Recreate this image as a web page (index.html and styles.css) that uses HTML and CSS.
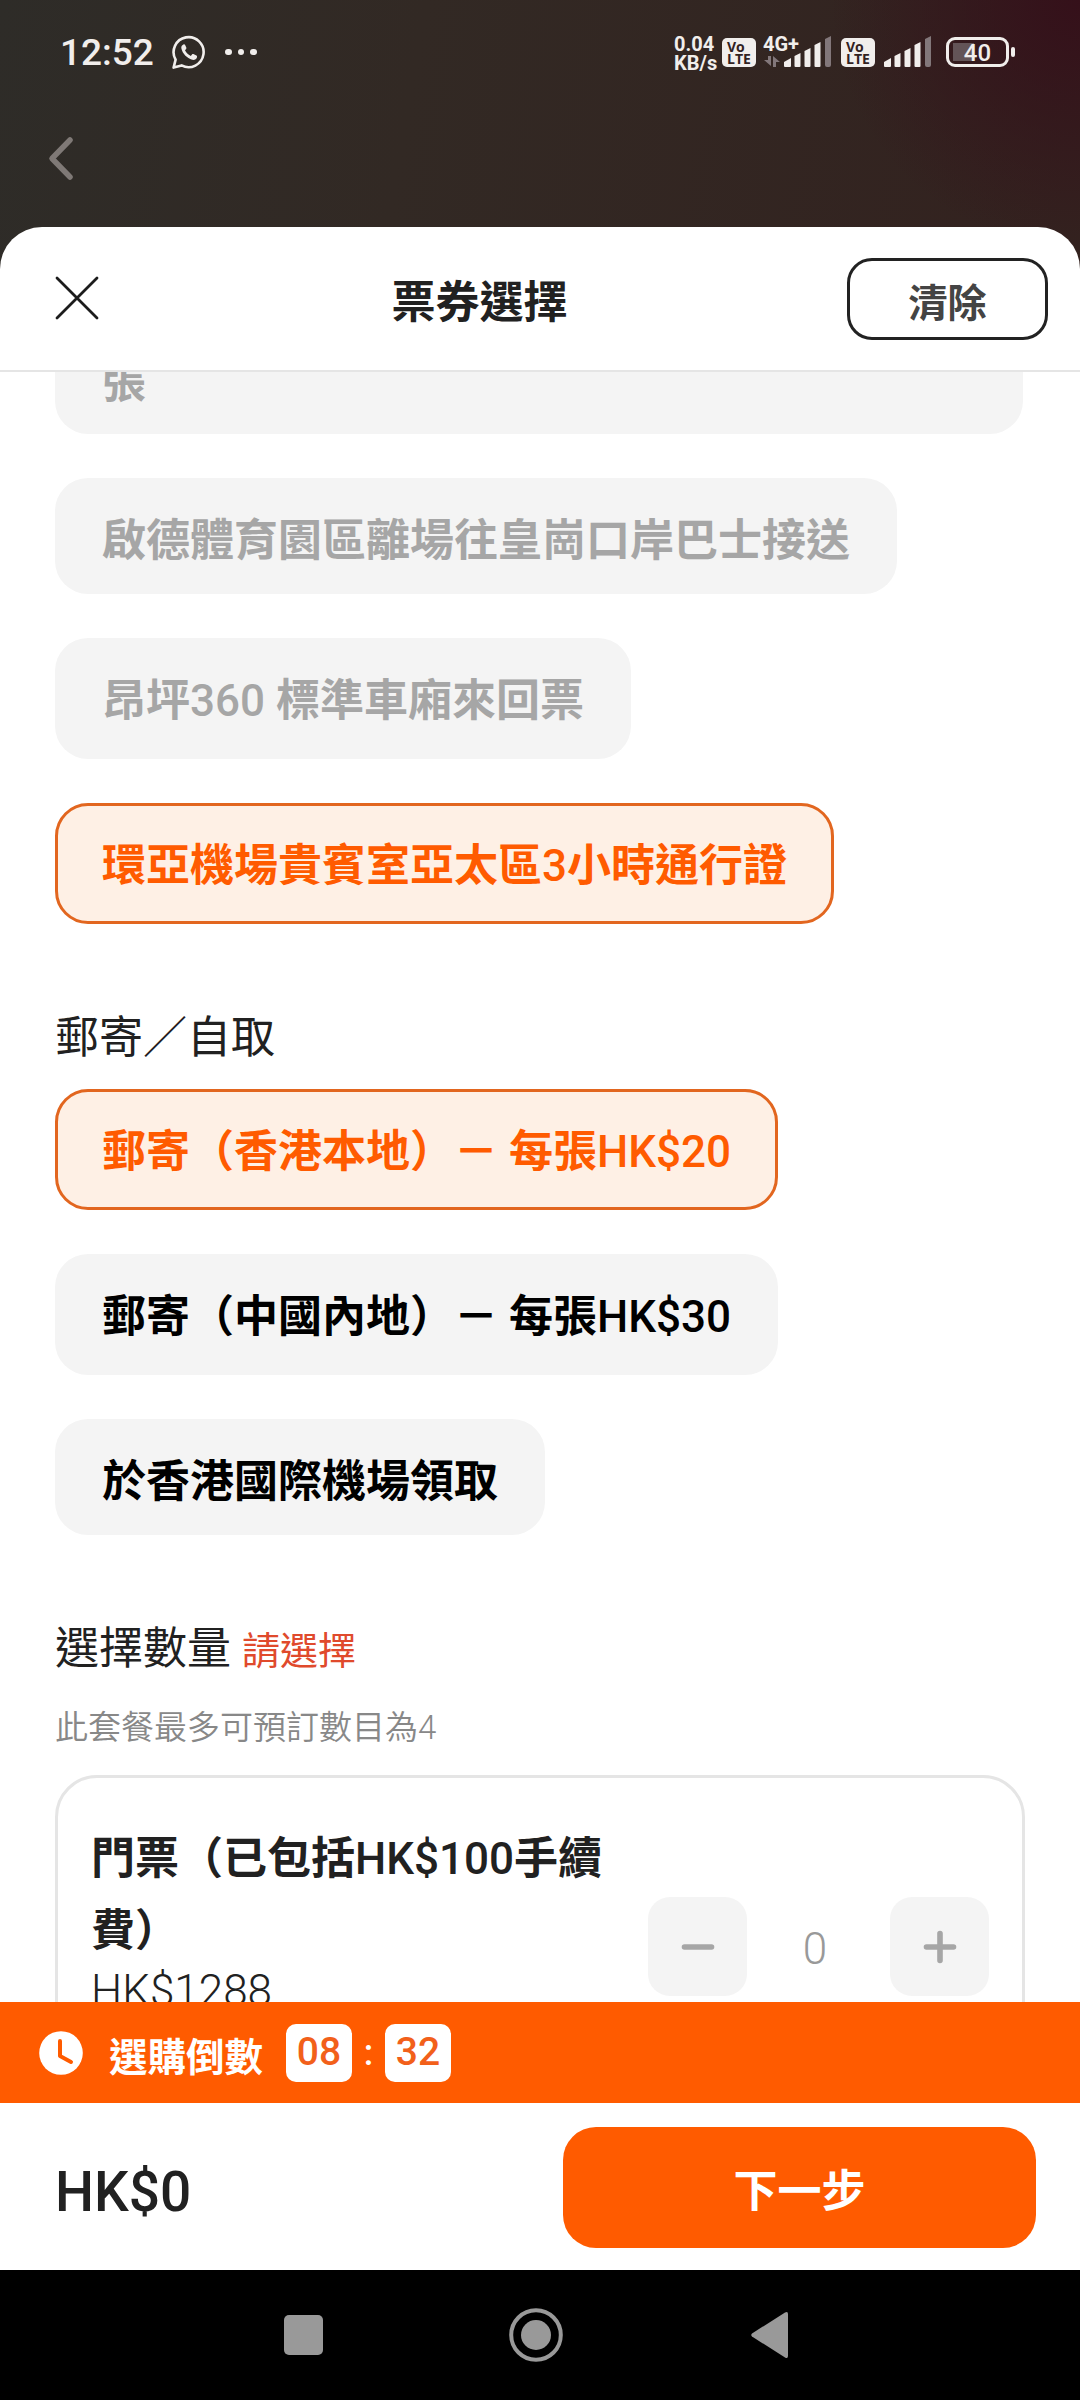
FILE: index.html
```html
<!DOCTYPE html>
<html lang="zh-Hant">
<head>
    <meta charset="UTF-8">
    <meta name="viewport" content="width=device-width, initial-scale=1.0">
    <title>票券選擇</title>
    <link rel="stylesheet" href="styles.css">
</head>
<body>
    <div class="screen">
        <div class="status-bar">
            <span class="time">12:52</span>
            <svg class="whatsapp" width="34" height="34" viewBox="0 0 34 34" fill="none">
                <path d="M1.6 32.6 L3.6 24.6 A15 15 0 1 1 9.6 30.4 Z" stroke="#f1eeec" stroke-width="2.6" stroke-linejoin="round"/>
                <path d="M11.4 9.4c-1.6.6-2.4 2.2-2 4.2 1 5 5.6 9.800 10.800 11.200 2.200.6 4.200-.6 4.800-2.600.2-.8 0-1.200-.6-1.600l-3-1.500c-.6-.3-1-.2-1.400.3l-1.200 1.500c-2.800-1.200-4.600-3-5.800-5.600l1.100-1.400c.3-.4.4-.8.200-1.300l-1.300-2.800c-.3-.6-.8-.7-1.600-.4z" fill="#f1eeec"/>
            </svg>
            <div class="dots"><i></i><i></i><i></i></div>

            <div class="status-right">
                <div class="speed"><div>0.04</div><div>KB/s</div></div>
                <div class="volte"><div>Vo</div><div>LTE</div></div>
                <div class="signal signal-data">
                    <span class="net">4G+</span>
                    <svg width="70" height="34" viewBox="0 0 70 34">
                        <g fill="#82777a">
                            <path d="M6 21h3v10L2 25h4z"/>
                            <path d="M11 32h3v-5h4l-7-6z"/>
                            <path d="M63 4l6-3v29a2 2 0 0 1-2 2h-2a2 2 0 0 1-2-2z"/>
                        </g>
                        <g fill="#f1eeec">
                            <path d="M22 27l7-4v8q0 1-1 1h-5q-1 0-1-1z"/>
                            <path d="M32.500 21l6-3v13q0 1-1 1h-4q-1 0-1-1z"/>
                            <path d="M42.500 16l6-3v18q0 1-1 1h-4q-1 0-1-1z"/>
                            <path d="M52.500 10l6-3v24q0 1-1 1h-4q-1 0-1-1z"/>
                        </g>
                    </svg>
                </div>
                <div class="volte"><div>Vo</div><div>LTE</div></div>
                <svg class="signal-two" width="50" height="34" viewBox="20 0 50 34">
                    <path d="M63 4l6-3v29a2 2 0 0 1-2 2h-2a2 2 0 0 1-2-2z" fill="#82777a"/>
                    <g fill="#f1eeec">
                        <path d="M22 27l7-4v8q0 1-1 1h-5q-1 0-1-1z"/>
                        <path d="M32.500 21l6-3v13q0 1-1 1h-4q-1 0-1-1z"/>
                        <path d="M42.500 16l6-3v18q0 1-1 1h-4q-1 0-1-1z"/>
                        <path d="M52.500 10l6-3v24q0 1-1 1h-4q-1 0-1-1z"/>
                    </g>
                </svg>
                <div class="battery">40</div>
            </div>
        </div>

        <div class="app-bar">
            <svg width="26" height="46" viewBox="0 0 26 46" fill="none" stroke="#7f7976" stroke-width="5.500" stroke-linecap="round" stroke-linejoin="round">
                <path d="M22 4 L4 22.500 L22 41"/>
            </svg>
        </div>

        <div class="sheet">
            <div class="sheet-header">
                <svg class="close" width="44" height="44" viewBox="0 0 44 44" stroke="#1c1c1c" stroke-width="2.800" stroke-linecap="round">
                    <path d="M2 2 L42 42 M42 2 L2 42"/>
                </svg>
                <h1>票券選擇</h1>
                <button class="clear">清除</button>
            </div>

            <div class="content">
                <div class="options extras">
                    <div class="option wide disabled">張</div>
                    <div class="option short disabled">啟德體育園區離場往皇崗口岸巴士接送</div>
                    <div class="option disabled">昂坪<span>360 </span>標準車廂來回票</div>
                    <div class="option selected">環亞機場貴賓室亞太區<span>3</span>小時通行證</div>
                </div>

                <h2>郵寄／自取</h2>
                <div class="options">
                    <div class="option selected">郵寄（香港本地）－<span> </span>每張<span>HK$20</span></div>
                    <div class="option">郵寄（中國內地）－<span> </span>每張<span>HK$30</span></div>
                    <div class="option short">於香港國際機場領取</div>
                </div>

                <h2 class="quantity-title">選擇數量 <span>請選擇</span></h2>
                <p class="hint">此套餐最多可預訂數目為4</p>

                <div class="ticket">
                    <div class="ticket-info">
                        <div class="ticket-name">門票（已包括<span>HK$100</span>手續費）</div>
                        <div class="ticket-price">HK$1288</div>
                    </div>
                    <div class="stepper">
                        <button>
                            <svg width="36" height="36" viewBox="0 0 36 36" stroke="#a6a6a6" stroke-width="5.600" stroke-linecap="round"><path d="M4.500 18H31.500"/></svg>
                        </button>
                        <span>0</span>
                        <button>
                            <svg width="36" height="36" viewBox="0 0 36 36" stroke="#a6a6a6" stroke-width="5.600" stroke-linecap="round"><path d="M4.500 18H31.500M18 4.500V31.500"/></svg>
                        </button>
                    </div>
                </div>
            </div>

            <div class="countdown">
                <svg width="44" height="44" viewBox="0 0 44 44" fill="none">
                    <circle cx="22" cy="22" r="21.800" fill="#fff"/>
                    <path d="M21 10V25L32 31" stroke="#ff5b00" stroke-width="4" stroke-linecap="round" stroke-linejoin="round"/>
                </svg>
                <span class="countdown-label">選購倒數</span>
                <b>08</b>
                <span class="colon">:</span>
                <b>32</b>
            </div>

            <div class="footer">
                <div class="total">HK$0</div>
                <button class="next">下一步</button>
            </div>
        </div>

        <div class="nav-bar">
            <svg width="40" height="40" viewBox="0 0 40 40"><rect width="39" height="40" rx="5" fill="#999"/></svg>
            <svg class="home" width="54" height="54" viewBox="0 0 54 54">
                <circle cx="27" cy="27" r="24.800" fill="none" stroke="#999" stroke-width="4"/>
                <circle cx="27" cy="27" r="15" fill="#999"/>
            </svg>
            <svg width="38" height="48" viewBox="0 0 38 48"><path d="M1 22.500 L34 1.500 Q37 0 37 3 V45 Q37 48 34 46.500 L1 25.500 Q-.5 24 1 22.500z" fill="#999"/></svg>
        </div>
    </div>
</body>
</html>
```

FILE: styles.css
```css
:root {
    --orange: #ff5b00;
    --ink: #212121;
    --grey: #f4f4f4;
    --line: #e5e5e5;
    --status: #f1eeec;
}
* {
    box-sizing: border-box;
}
body {
    margin: 0;
    font-family: Roboto, "Noto Sans CJK TC", sans-serif;
    color: var(--ink);
}
button {
    font-family: inherit;
    border: none;
    padding: 0;
}
svg {
    display: block;
    flex: none;
}
.screen {
    width: 1080px;
    height: 2400px;
    display: flex;
    flex-direction: column;
    overflow: hidden;
    background:
        radial-gradient(circle at 1080px 0, #35101a 0, rgba(53, 16, 26, 0) 250px),
        linear-gradient(100deg, #2e2c28 0, #322924 420px, #33221f 1080px);
}

/* status bar */
.status-bar {
    height: 104px;
    padding: 0 64px 0 60px;
    display: flex;
    align-items: center;
    color: var(--status);
    flex: none;
}
.time {
    width: 112px;
    font-size: 37px;
    font-weight: 500;
    line-height: 44px;
    padding-top: 2px;
}
.dots {
    display: flex;
    gap: 6px;
    margin-left: 19px;
}
.dots i {
    width: 6.500px;
    height: 6.500px;
    border-radius: 50%;
    background: var(--status);
}
.status-right {
    display: flex;
    align-items: center;
    margin-left: auto;
}
.speed {
    width: 48px;
    font-size: 20px;
    font-weight: 700;
    line-height: 19px;
    padding-top: 4px;
}
.volte {
    width: 34px;
    height: 29px;
    border-radius: 5px;
    background: var(--status);
    color: #32221f;
    font-family: "Open Sans", sans-serif;
    font-size: 14px;
    font-weight: 700;
    line-height: 12px;
    padding: 3px 0 0 5px;
}
.signal {
    position: relative;
    margin: 0 9px 0 6px;
}
.net {
    position: absolute;
    left: 1px;
    top: -3px;
    font-size: 20px;
    font-weight: 700;
    line-height: 24px;
}
.signal-two {
    margin-left: 7px;
}
.battery {
    position: relative;
    width: 63px;
    height: 30px;
    margin: 0 7px 0 14px;
    border: 3px solid var(--status);
    border-radius: 9px;
    background: linear-gradient(#635457, #635457) 4px 3px / 21px 18px no-repeat;
    font-size: 24px;
    font-weight: 500;
    line-height: 27px;
    text-align: center;
}
.battery::after {
    content: "";
    position: absolute;
    right: -9px;
    top: 7px;
    width: 4px;
    height: 10px;
    border-radius: 2px;
    background: var(--status);
}
.app-bar {
    height: 123px;
    padding: 32px 0 0 48px;
    flex: none;
}

/* bottom sheet */
.sheet {
    height: 2043px;
    display: flex;
    flex-direction: column;
    background: #fff;
    border-radius: 42px 42px 0 0;
    overflow: hidden;
    flex: none;
}
.sheet-header {
    height: 145px;
    padding: 0 32px 0 55px;
    display: grid;
    grid-template-columns: 201px 1fr 201px;
    align-items: center;
    border-bottom: 2px solid var(--line);
    flex: none;
}
.close {
    margin-top: -1px;
}
h1 {
    margin: 0 144px 0 0;
    padding-top: 8px;
    font-size: 44px;
    font-weight: 700;
    line-height: 60px;
    text-align: center;
}
.clear {
    height: 82px;
    padding-top: 3px;
    border: 3px solid #222;
    border-radius: 25px;
    background: #fff;
    color: #444;
    font-size: 39px;
    font-weight: 700;
}
.content {
    height: 1630px;
    padding: 0 55px;
    overflow: hidden;
    flex: none;
}
.options {
    display: flex;
    flex-direction: column;
    align-items: flex-start;
    gap: 44px;
}
.extras {
    margin-top: -52px;
}
.option {
    height: 121px;
    padding: 0 47px;
    border-radius: 33px;
    background: var(--grey);
    color: #000;
    font-size: 44px;
    font-weight: 700;
    line-height: 127px;
    white-space: nowrap;
}
/* digits and latin are one step lighter than the chinese text */
.option span,
.ticket-name span {
    font-weight: 500;
}
.option.short {
    height: 116px;
}
.option.wide {
    width: 968px;
    height: 114px;
}
.option.disabled {
    color: #a6a6a6;
}
.option.selected {
    border: 3px solid #e2661f;
    padding: 0 44px;
    line-height: 121px;
    background: #fef0e5;
    color: var(--orange);
}
h2 {
    margin: 82px 0 19px;
    font-size: 44px;
    font-weight: 400;
    line-height: 64px;
}
h2 span {
    font-size: 38px;
    color: #e04a2c;
}
.quantity-title {
    margin-bottom: 20px;
}
.hint {
    margin: 0 0 22px;
    font-size: 33px;
    line-height: 50px;
    font-weight: 350;
    color: #888;
}
.ticket {
    width: 970px;
    height: 420px;
    display: flex;
    justify-content: space-between;
    border: 3px solid var(--line);
    border-radius: 42px;
    padding: 45px 33px 0;
}
.ticket-info {
    width: 530px;
}
.ticket-name {
    font-size: 44px;
    font-weight: 700;
    line-height: 72px;
}
.ticket-price {
    font-size: 44px;
    font-weight: 300;
    line-height: 48px;
}
.stepper {
    display: flex;
    width: 341px;
    height: 99px;
    margin-top: 74px;
    justify-content: space-between;
    align-items: center;
    font-size: 44px;
    font-weight: 300;
    color: #999;
}
.stepper span {
    padding: 5px 7px 0 0;
}
.stepper button {
    width: 99px;
    height: 99px;
    border-radius: 22px;
    background: var(--grey);
    display: flex;
    align-items: center;
    justify-content: center;
}

/* countdown + footer */
.countdown {
    height: 101px;
    padding-left: 39px;
    display: flex;
    align-items: center;
    background: var(--orange);
    color: #fff;
    flex: none;
}
.countdown-label {
    width: 177px;
    margin-left: 26px;
    padding-top: 3px;
    font-size: 38.500px;
    font-weight: 700;
}
.countdown b {
    width: 66px;
    height: 58px;
    border-radius: 10px;
    background: #fff;
    color: #f2601a;
    font-size: 39px;
    font-weight: 500;
    line-height: 56px;
    text-align: center;
}
.colon {
    width: 33px;
    font-size: 36px;
    font-weight: 500;
    text-align: center;
}
.footer {
    flex: 1;
    padding: 0 44px 0 55px;
    display: flex;
    align-items: center;
    justify-content: space-between;
}
.total {
    font-size: 55px;
    font-weight: 500;
    padding-top: 10px;
}
.next {
    width: 473px;
    height: 121px;
    margin-top: 2px;
    border-radius: 33px;
    background: var(--orange);
    color: #fff;
    font-size: 44px;
    font-weight: 700;
}
.nav-bar {
    flex: 1;
    padding: 0 291px 0 284px;
    display: flex;
    align-items: center;
    justify-content: space-between;
    background: #000;
}
.home {
    margin-right: 3px;
}
```
